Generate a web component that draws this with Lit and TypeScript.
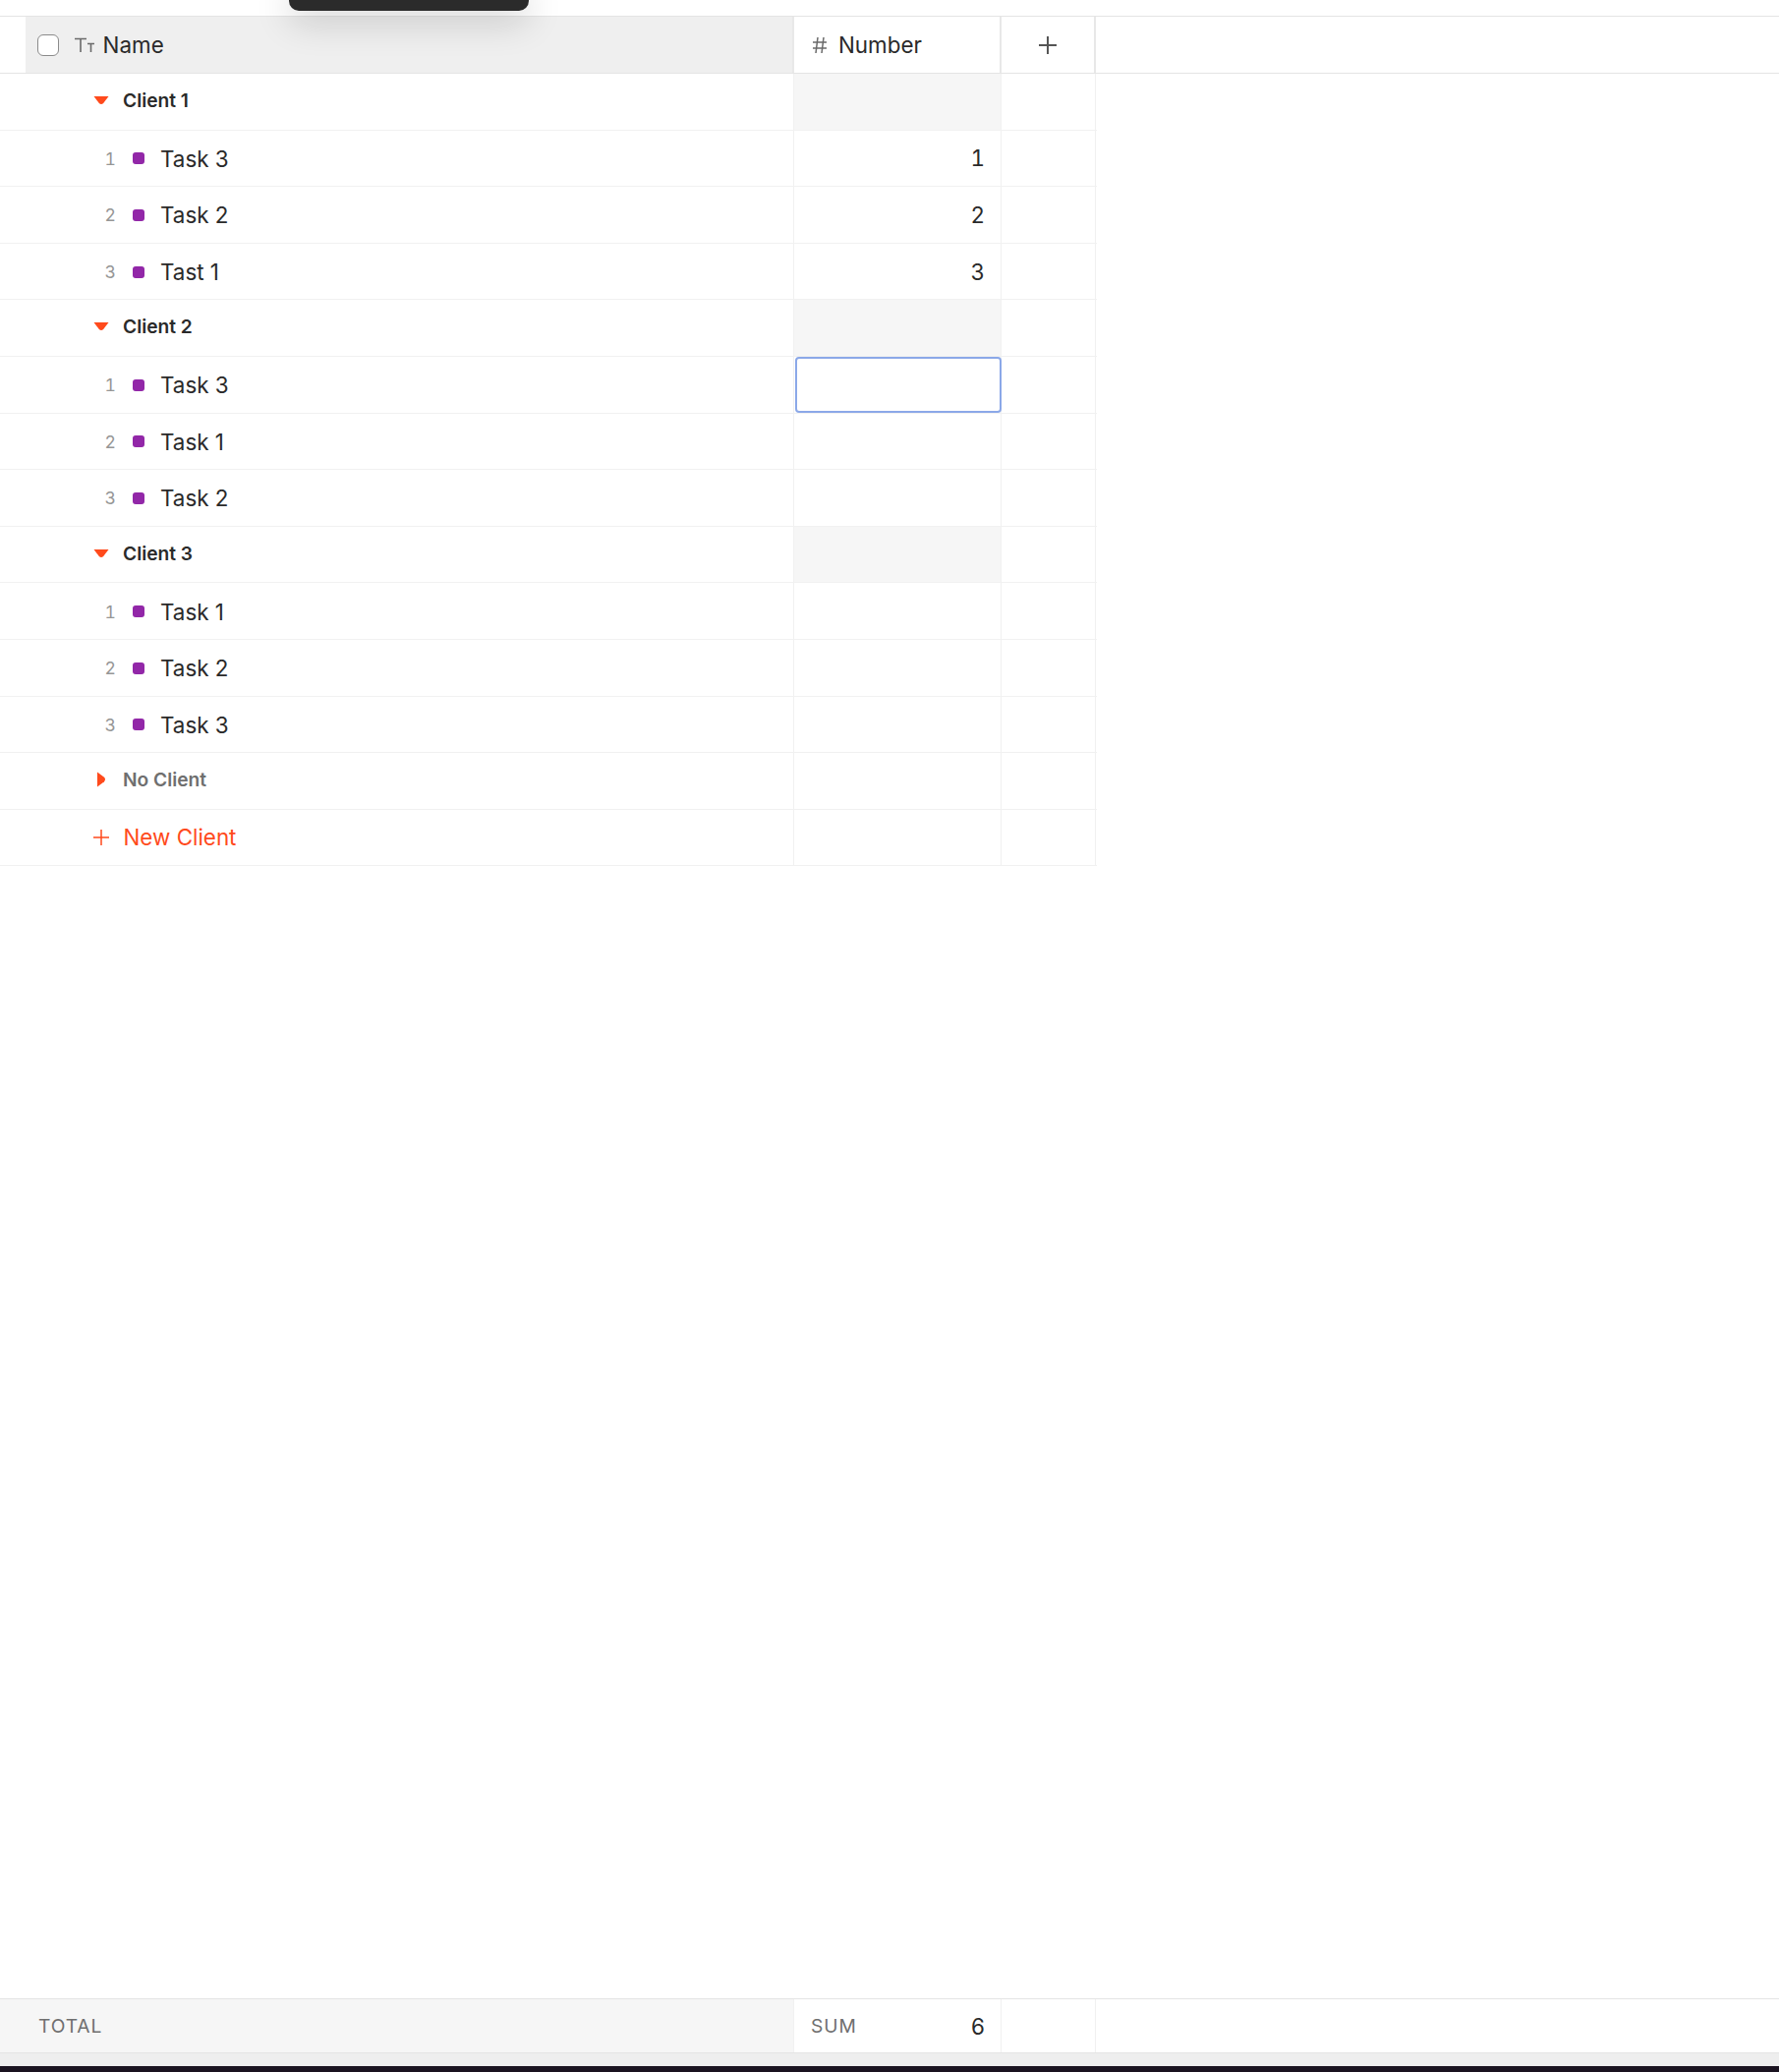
import { css, html, LitElement, nothing } from 'lit';
import { customElement } from 'lit/decorators.js';

interface Task {
  name: string;
  num?: number;
  editing?: boolean;
}

interface Group {
  name: string;
  tasks: Task[];
}

const GROUPS: Group[] = [
  {
    name: 'Client 1',
    tasks: [
      { name: 'Task 3', num: 1 },
      { name: 'Task 2', num: 2 },
      { name: 'Tast 1', num: 3 },
    ],
  },
  {
    name: 'Client 2',
    tasks: [{ name: 'Task 3', editing: true }, { name: 'Task 1' }, { name: 'Task 2' }],
  },
  {
    name: 'Client 3',
    tasks: [{ name: 'Task 1' }, { name: 'Task 2' }, { name: 'Task 3' }],
  },
];

@customElement('app-root')
export class AppRoot extends LitElement {
  static override styles = css`
    :host {
      display: flex;
      flex-direction: column;
      position: relative;
      height: 2108px;
      overflow: hidden;
      background: #fff;
      color: #2a2a2a;
      font-family: Inter, 'Liberation Sans', sans-serif;
      font-size: 22.4px;
    }
    .toast {
      position: absolute;
      left: 294px;
      top: -20px;
      width: 244px;
      height: 31px;
      border-radius: 10px;
      background: #2b2b2b;
      box-shadow: 0 12px 36px rgba(0, 0, 0, 0.16);
      z-index: 2;
    }
    .top-gap {
      height: 16px;
      flex: none;
    }
    .head {
      display: grid;
      grid-template-columns: 808px 211px 96px 1fr;
      height: 59px;
      flex: none;
      border-top: 1px solid #e4e4e4;
      border-bottom: 1px solid #e4e4e4;
      box-sizing: border-box;
    }
    .head > div {
      display: flex;
      align-items: center;
    }
    .head-name {
      margin-left: 25.6px;
      padding-left: 12px;
      background: #efefef;
      border-right: 2px solid #e8e8e8;
      box-sizing: border-box;
    }
    .check {
      width: 22px;
      height: 22px;
      box-sizing: border-box;
      border: 1.5px solid #8b8b8b;
      border-radius: 6px;
      background: #fff;
      margin-right: 15px;
    }
    .tt {
      margin-right: 8px;
    }
    .head-num {
      padding-left: 18px;
      border-right: 2px solid #e8e8e8;
      box-sizing: border-box;
      gap: 11px;
    }
    .head-add {
      justify-content: center;
      border-right: 2px solid #e8e8e8;
      box-sizing: border-box;
    }
    .row {
      display: grid;
      grid-template-columns: 808px 211px 96px;
      width: 1116px;
      height: 57.6px;
      flex: none;
      border-bottom: 1.5px solid #f1f1f1;
      box-sizing: border-box;
    }
    .cell {
      display: flex;
      align-items: center;
      position: relative;
      border-right: 1.5px solid #f1f1f1;
      box-sizing: border-box;
    }
    .task-text {
      padding-top: 1px;
    }
    .indent-group {
      padding-left: 95px;
      padding-bottom: 2.5px;
      gap: 14px;
      font-size: 19.2px;
      font-weight: 600;
    }
    .muted {
      color: #6f6f6f;
    }
    .grey {
      background: #f6f6f6;
    }
    .tri {
      width: 16px;
      flex: none;
      display: flex;
      justify-content: center;
    }
    .index {
      width: 118px;
      flex: none;
      margin-top: 1px;
      text-align: right;
      font-size: 17.6px;
      color: #969696;
      font-variant-numeric: tabular-nums;
    }
    .dot {
      width: 12px;
      height: 12px;
      margin: 1px 16px 0 17px;
      border-radius: 3px;
      background: #9227a8;
      flex: none;
    }
    .num {
      justify-content: flex-end;
      padding-right: 16px;
      font-variant-numeric: tabular-nums;
    }
    .editor {
      position: absolute;
      inset: 0 -1px 0 1px;
      border: 2.5px solid #8ba8e8;
      border-radius: 4px;
    }
    .new {
      padding-left: 94px;
      padding-bottom: 1px;
      gap: 13.5px;
      color: #ff4a1c;
    }
    .fill {
      flex: 1;
    }
    .foot {
      display: grid;
      grid-template-columns: 808px 211px 96px 1fr;
      height: 56px;
      flex: none;
      border-top: 1.5px solid #e4e4e4;
      border-bottom: 1.5px solid #e4e4e4;
      box-sizing: border-box;
    }
    .foot > div {
      display: flex;
      align-items: center;
      border-right: 1.5px solid #f1f1f1;
      box-sizing: border-box;
    }
    .foot-name {
      background: #f6f6f6;
      padding-left: 39px;
    }
    .label {
      font-size: 19.2px;
      letter-spacing: 0.9px;
      color: #6f6f6f;
    }
    .foot-num {
      justify-content: space-between;
      padding: 1px 16px 0 17px;
    }
    .foot-num .label {
      margin-top: -1px;
    }
    .foot-last {
      border-right: none !important;
    }
    .scroll {
      height: 13px;
      flex: none;
      background: #eeeeee;
    }
    .dock {
      height: 6px;
      flex: none;
      background: #1a1320;
    }
  `;

  private plus(size: number, color: string, width: number) {
    const end = size - 1;
    const mid = size / 2;
    return html`<svg width=${size} height=${size} viewBox="0 0 ${size} ${size}" fill="none" stroke=${color} stroke-width=${width}>
      <path d="M1 ${mid}H${end}M${mid} 1V${end}"></path>
    </svg>`;
  }

  private triangle(open: boolean) {
    return html`<span class="tri">
      ${open
        ? html`<svg width="16" height="10" viewBox="0 0 16 10"><path d="M0.5 1H15.5L10.2 8Q8 10 5.8 8Z" fill="#ff4a1c"></path></svg>`
        : html`<svg width="10" height="16" viewBox="0 0 10 16"><path d="M1 0.5L8 5.8Q10 8 8 10.2L1 15.5Z" fill="#ff4a1c"></path></svg>`}
    </span>`;
  }

  private renderGroup(group: Group) {
    return html`
      <div class="row">
        <div class="cell indent-group">${this.triangle(true)}<span>${group.name}</span></div>
        <div class="cell grey"></div>
        <div class="cell"></div>
      </div>
      ${group.tasks.map(
        (task, i) => html`
          <div class="row">
            <div class="cell">
              <span class="index">${i + 1}</span>
              <span class="dot"></span>
              <span class="task-text">${task.name}</span>
            </div>
            <div class="cell num">
              ${task.num ?? nothing}
              ${task.editing ? html`<div class="editor"></div>` : nothing}
            </div>
            <div class="cell"></div>
          </div>
        `
      )}
    `;
  }

  override render() {
    return html`
      <div class="toast"></div>
      <div class="top-gap"></div>
      <div class="head">
        <div class="head-name">
          <span class="check"></span>
          <svg class="tt" width="22" height="16" viewBox="0 0 22 16" fill="none" stroke="#6a6a6a" stroke-width="1.6">
            <path d="M1 1.5H13M7 1.5V15M14 6.5H21M17.5 6.5V15"></path>
          </svg>
          <span>Name</span>
        </div>
        <div class="head-num">
          <svg width="16" height="18" viewBox="0 0 16 18" fill="none" stroke="#6a6a6a" stroke-width="1.5">
            <path d="M6 1L4 17M12 1L10 17M1 6H15M1 12H15"></path>
          </svg>
          <span>Number</span>
        </div>
        <div class="head-add">${this.plus(20, '#555', 2)}</div>
        <div></div>
      </div>
      ${GROUPS.map((g) => this.renderGroup(g))}
      <div class="row">
        <div class="cell indent-group muted">${this.triangle(false)}<span>No Client</span></div>
        <div class="cell"></div>
        <div class="cell"></div>
      </div>
      <div class="row">
        <div class="cell new">${this.plus(18, '#ff4a1c', 1.5)}<span>New Client</span></div>
        <div class="cell"></div>
        <div class="cell"></div>
      </div>
      <div class="fill"></div>
      <div class="foot">
        <div class="foot-name"><span class="label">TOTAL</span></div>
        <div class="foot-num"><span class="label">SUM</span><span>6</span></div>
        <div></div>
        <div class="foot-last"></div>
      </div>
      <div class="scroll"></div>
      <div class="dock"></div>
    `;
  }
}
